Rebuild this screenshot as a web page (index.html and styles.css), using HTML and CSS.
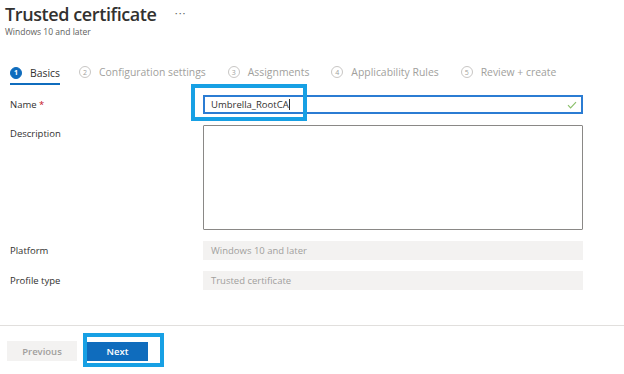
FILE: index.html
```html
<!DOCTYPE html>
<html lang="en">
<head>
  <meta charset="UTF-8" />
  <title>Trusted certificate</title>
  <link rel="stylesheet" href="styles.css">
</head>
<body>
  <div class="header">
    <h1>Trusted certificate <span class="more">&middot;&middot;&middot;</span></h1>
    <div class="subtitle">Windows 10 and later</div>
  </div>

  <!-- wizard steps -->
  <div class="steps">
    <div class="step active"><span class="num">1</span>Basics</div>
    <div class="step"><span class="num">2</span>Configuration settings</div>
    <div class="step"><span class="num">3</span>Assignments</div>
    <div class="step"><span class="num">4</span>Applicability Rules</div>
    <div class="step"><span class="num">5</span>Review + create</div>
  </div>

  <div class="form">
    <div class="row row-name">
      <label>Name <span class="req">*</span></label>
      <div class="field">
        <div class="input name-input">Umbrella_RootCA<span class="caret"></span>
          <svg class="check" width="10" height="8" viewBox="0 0 10 8"><path d="M1 4.2 L3.6 6.8 L9 1.2" fill="none" stroke="#8cc06c" stroke-width="1.2"/></svg>
        </div>
        <div class="highlight hl-name"></div>
      </div>
    </div>
    <div class="row row-desc">
      <label>Description</label>
      <div class="field"><div class="textarea"></div></div>
    </div>
    <div class="row row-platform">
      <label>Platform</label>
      <div class="field"><div class="input readonly">Windows 10 and later</div></div>
    </div>
    <div class="row row-profile">
      <label>Profile type</label>
      <div class="field"><div class="input readonly">Trusted certificate</div></div>
    </div>
  </div>

  <div class="footer">
    <button class="btn prev">Previous</button>
    <div class="next-wrap">
      <button class="btn next">Next</button>
      <div class="highlight hl-next"></div>
    </div>
  </div>
</body>
</html>
```

FILE: styles.css
```css
* {
  box-sizing: border-box;
  margin: 0;
  padding: 0;
}
body {
  background: #fff;
  color: #323130;
  font-family: "Open Sans", "Noto Sans", sans-serif;
  width: 624px;
  height: 374px;
  overflow: hidden;
}
.header {
  padding: 1px 0 0 5px;
  height: 62px;
}
h1 {
  font-size: 18px;
  font-weight: 600;
  line-height: 24px;
  color: #323130;
  letter-spacing: -0.4px;
}
.more {
  font-size: 11px;
  font-weight: 400;
  color: #605e5c;
  margin-left: 14px;
  vertical-align: 4px;
  letter-spacing: 1px;
}
.subtitle {
  font-size: 8.5px;
  color: #605e5c;
  line-height: 12px;
}
/* steps */
.steps {
  display: flex;
  padding-left: 10px;
  height: 24px;
}
.step {
  display: flex;
  align-items: center;
  font-size: 10.4px;
  color: #a19f9d;
  margin-right: 22px;
  height: 20px;
  white-space: nowrap;
}
.step .num {
  width: 12px;
  height: 12px;
  border: 1px solid #c8c6c4;
  border-radius: 50%;
  font-size: 7px;
  display: inline-flex;
  align-items: center;
  justify-content: center;
  margin-right: 8px;
  color: #a19f9d;
}
.step.active {
  color: #323130;
  border-bottom: 2px solid #0f6cbd;
  height: 23px;
  margin-right: 19px;
}
.step.active .num {
  background: #0f6cbd;
  border-color: #0f6cbd;
  color: #fff;
  font-weight: 700;
}
/* form */
.form {
  padding-top: 9px;
}
.row {
  display: flex;
  align-items: flex-start;
}
.row label {
  width: 203px;
  padding-left: 10px;
  font-size: 9.5px;
  color: #323130;
  line-height: 19px;
}
.req {
  color: #c50f1f;
}
.field {
  position: relative;
  width: 380px;
}
.input {
  height: 19px;
  border: 1px solid #8a8886;
  font-size: 9.5px;
  line-height: 17px;
  padding-left: 7px;
  color: #323130;
  position: relative;
}
.name-input {
  border: 2px solid #2b7cd3;
  line-height: 15px;
  padding-left: 6px;
}
.caret {
  display: inline-block;
  width: 1px;
  height: 11px;
  background: #323130;
  vertical-align: -2px;
}
.check {
  position: absolute;
  right: 4px;
  top: 4px;
}
.row-desc {
  margin-top: 11px;
}
.row-desc label {
  line-height: 18px;
}
.textarea {
  height: 105px;
  border: 1px solid #8a8886;
  border-radius: 1px;
}
.row-platform {
  margin-top: 11px;
}
.row-profile {
  margin-top: 11px;
}
.input.readonly {
  border: none;
  background: #f3f2f1;
  color: #a19f9d;
  height: 19px;
  line-height: 19px;
  padding-left: 8px;
}
/* footer */
.footer {
  position: absolute;
  top: 325px;
  left: 0;
  width: 624px;
  border-top: 1px solid #e1dfdd;
  padding: 15px 0 0 7px;
  display: flex;
  align-items: flex-start;
}
.btn {
  display: block;
  font-family: inherit;
  font-size: 9.5px;
  font-weight: 600;
  border: none;
  height: 19px;
}
.prev {
  width: 70px;
  background: #f3f2f1;
  color: #a19f9d;
  height: 20px;
}
.next-wrap {
  position: relative;
  margin-left: 10px;
  margin-top: 1px;
}
.next {
  width: 61px;
  background: #0f6cbd;
  color: #fff;
}
.highlight {
  position: absolute;
  border: 4px solid #17a0e4;
}
.hl-name {
  left: -12px;
  top: -11px;
  width: 116px;
  height: 37px;
}
.hl-next {
  left: -4px;
  top: -9px;
  width: 81px;
  height: 34px;
}
```
